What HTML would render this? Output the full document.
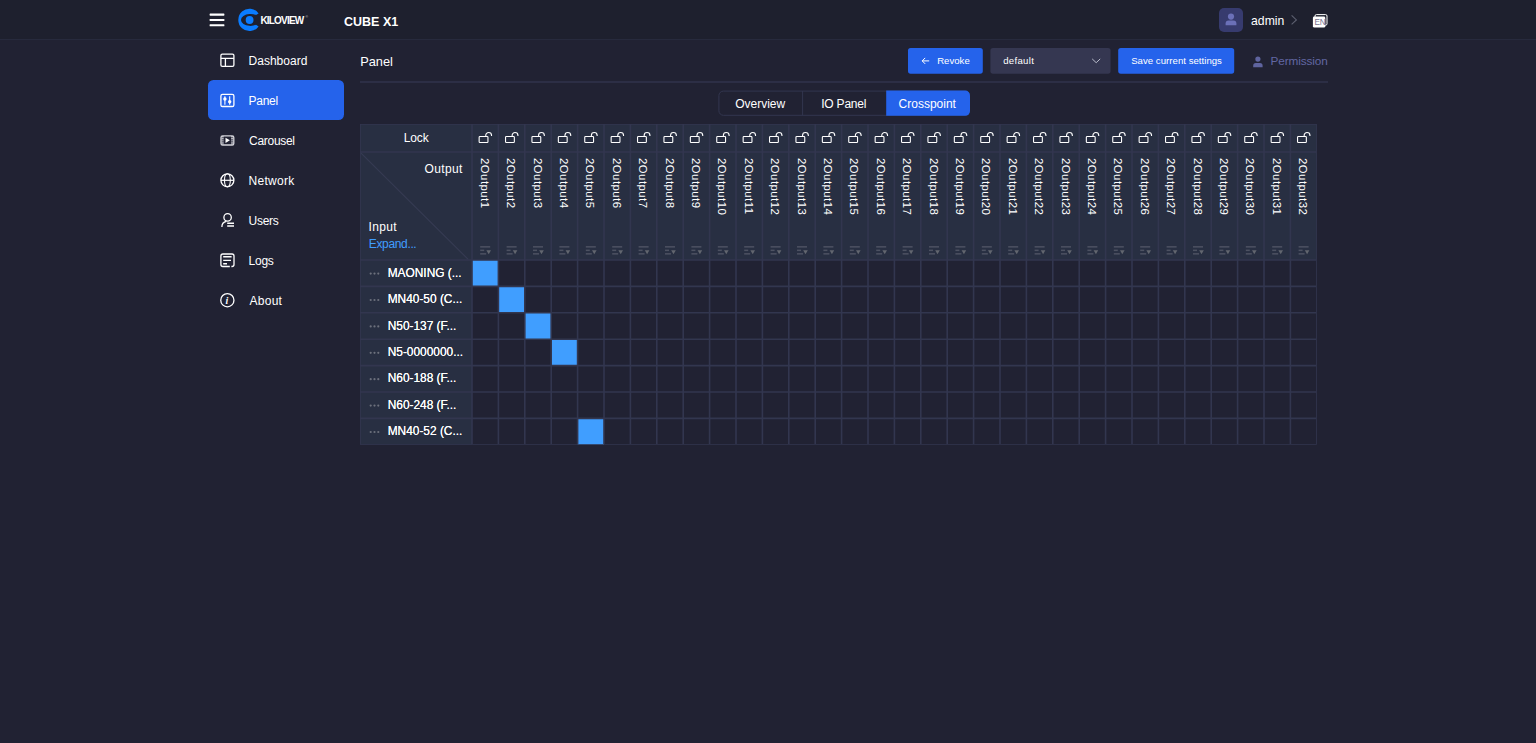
<!DOCTYPE html><html lang="en"><head><meta charset="utf-8"><title>CUBE X1 - Panel</title>
<style>

html,body{margin:0;padding:0;background:#212233;}
body{width:1536px;height:743px;overflow:hidden;background:#212233;font-family:"Liberation Sans", Arial, sans-serif;position:relative;}
.t{position:absolute;white-space:nowrap;}
.abs{position:absolute;}
#top{position:absolute;left:0;top:0;width:1536px;height:39px;background:#1e202e;border-bottom:1px solid #272a3d;}
svg{position:absolute;overflow:visible;}
.vt{position:absolute;writing-mode:vertical-rl;white-space:nowrap;color:#fff;}

</style></head><body>
<div id="top"></div>
<svg style="left:0;top:0" width="340" height="40" viewBox="0 0 340 40">
<rect x="209.6" y="13.6" width="14.8" height="2.1" rx="0.6" fill="#fff"/>
<rect x="209.6" y="18.9" width="14.8" height="2.1" rx="0.6" fill="#fff"/>
<rect x="209.6" y="24.2" width="14.8" height="2.1" rx="0.6" fill="#fff"/>
<path d="M258.6 13.4 A11.2 11.2 0 1 0 258.6 26.4 L256 24.79 A9.5 6.0 0 1 1 256 15.01 Z" fill="#0a7cff"/>
<circle cx="249.6" cy="20" r="3.9" fill="#0a7cff"/>
</svg>
<span class="t " style="left:260.4px;top:15.54px;font-size:10.0px;line-height:10.0px;color:#fff;font-weight:700;letter-spacing:-0.8px;">KILOVIEW</span>
<span class="t " style="left:305.6px;top:16.42px;font-size:3.4px;line-height:3.4px;color:#ccc;font-weight:400;">&reg;</span>
<span class="t " style="left:344.0px;top:15.52px;font-size:12.5px;line-height:12.5px;color:#fff;font-weight:700;">CUBE X1</span>
<div class="abs" style="left:1219px;top:8px;width:24px;height:24px;border-radius:5px;background:#373b6e"></div>
<svg style="left:1219px;top:8px" width="24" height="24" viewBox="0 0 24 24"><circle cx="12" cy="8.6" r="3.1" fill="#6b70b8"/><path d="M6.6 17.2 v-1.6 a3 3 0 0 1 3-3 h4.8 a3 3 0 0 1 3 3 v1.6 z" fill="#6b70b8"/></svg>
<span class="t " style="left:1251.1px;top:15.37px;font-size:12.2px;line-height:12.2px;color:#fff;font-weight:400;">admin</span>
<svg style="left:1288px;top:10px" width="14" height="20" viewBox="0 0 14 20"><path d="M3.6 5.4 L8.4 9.9 L3.6 14.4" fill="none" stroke="#5d6070" stroke-width="1.1"/></svg>
<svg style="left:1310px;top:11.5px" width="20" height="18" viewBox="0 0 20 18"><rect x="5" y="2.6" width="12" height="10.6" rx="1.4" fill="none" stroke="#fff" stroke-width="1"/><rect x="2.9" y="4.6" width="12.4" height="11" rx="1.4" fill="#fff"/></svg>
<span class="t " style="left:1314.4px;top:18.66px;font-size:8.2px;line-height:8.2px;color:#77738f;font-weight:400;letter-spacing:-0.2px;">EN</span>
<div class="abs" style="left:208px;top:80px;width:136px;height:40px;border-radius:5.5px;background:#2563eb"></div>
<span class="t " style="left:248.6px;top:54.54px;font-size:12px;line-height:12px;color:#fff;font-weight:400;letter-spacing:0px;">Dashboard</span>
<span class="t " style="left:248.6px;top:94.54px;font-size:12px;line-height:12px;color:#fff;font-weight:400;letter-spacing:-0.3px;">Panel</span>
<span class="t " style="left:249.1px;top:134.54px;font-size:12px;line-height:12px;color:#fff;font-weight:400;letter-spacing:-0.3px;">Carousel</span>
<span class="t " style="left:248.6px;top:174.54px;font-size:12px;line-height:12px;color:#fff;font-weight:400;letter-spacing:0.27px;">Network</span>
<span class="t " style="left:248.6px;top:214.54px;font-size:12px;line-height:12px;color:#fff;font-weight:400;letter-spacing:-0.3px;">Users</span>
<span class="t " style="left:248.6px;top:254.54px;font-size:12px;line-height:12px;color:#fff;font-weight:400;letter-spacing:-0.25px;">Logs</span>
<span class="t " style="left:249.4px;top:294.54px;font-size:12px;line-height:12px;color:#fff;font-weight:400;letter-spacing:0.3px;">About</span>
<svg style="left:0;top:0" width="345" height="330" viewBox="0 0 345 330" fill="none" stroke="#fff" stroke-width="1.3">
<rect x="220.9" y="54.2" width="13" height="12.2" rx="1.4"/><path d="M220.9 58.3 H233.9 M225.4 58.3 V66.4"/>
<rect x="220.9" y="94.3" width="13" height="12.2" rx="1.6"/><path d="M224.9 96.2 V104.8 M229.7 96.2 V104.8" stroke-width="1.1"/><circle cx="224.9" cy="99" r="1.7" fill="#fff" stroke="none"/><circle cx="229.7" cy="101.7" r="1.7" fill="#fff" stroke="none"/>
<g stroke="#d4d4da"><rect x="221" y="135.8" width="12.8" height="9.2" rx="1.6"/><path d="M222.6 136 V145 M232.2 136 V145" stroke-width="2.2" stroke-dasharray="1.4 0.7" opacity="0.85"/></g><path d="M225.5 137.7 L229.9 140.3 L225.5 142.9 Z" fill="#fff" stroke="none"/>
<circle cx="227.4" cy="180.3" r="6.5"/><ellipse cx="227.4" cy="180.3" rx="2.9" ry="6.5" stroke-width="1.1"/><path d="M220.9 180.3 H233.9" stroke-width="1.2"/>
<circle cx="227.6" cy="217.4" r="3.7"/><path d="M221.9 227 A5.6 5.6 0 0 1 226.4 221.3"/><path d="M227.2 223.2 H234 M227.2 225.9 H234" stroke-width="1.5"/>
<path d="M229.8 266.5 H222.9 A2 2 0 0 1 220.9 264.5 V256 A2 2 0 0 1 222.9 254 H232 A2 2 0 0 1 234 256 V264.5 A2 2 0 0 1 232 266.5 H231.4"/><path d="M223.2 256.8 H231.6 M223.2 260.4 H231 M223.2 263.8 H227" stroke-width="1.4"/>
<circle cx="227.35" cy="300.2" r="6.6"/>
</svg>
<span class="t " style="left:225.5px;top:296.24px;font-size:10px;line-height:10px;color:#fff;font-weight:700;font-family:'Liberation Serif',serif;font-style:italic;">i</span>
<span class="t " style="left:360.2px;top:55.56px;font-size:12.8px;line-height:12.8px;color:#fff;font-weight:400;">Panel</span>
<div class="abs" style="left:360px;top:81px;width:968px;height:2px;background:#2c2e45"></div>
<svg style="left:0;top:0" width="1240" height="80" viewBox="0 0 1240 80"><rect x="908" y="48" width="74.8" height="25.7" rx="2.6" fill="#2563eb"/><rect x="990.4" y="48" width="120.2" height="25.7" rx="2.6" fill="#353751"/><rect x="1118.2" y="48" width="116" height="25.7" rx="2.6" fill="#2563eb"/></svg>
<svg style="left:912.4px;top:47.6px" width="30" height="26" viewBox="0 0 30 26"><path d="M13.2 9.9 L10.2 12.9 L13.2 15.9 M10.2 12.9 H17.2" fill="none" stroke="#fff" stroke-width="1"/></svg>
<span class="t " style="left:937.2px;top:55.77px;font-size:9.6px;line-height:9.6px;color:#fff;font-weight:400;">Revoke</span>
<span class="t " style="left:1003.2px;top:55.77px;font-size:9.6px;line-height:9.6px;color:#fff;font-weight:400;letter-spacing:0.3px;">default</span>
<svg style="left:1088px;top:54px" width="16" height="14" viewBox="0 0 16 14"><path d="M4.2 4.9 L8.2 8.7 L12.2 4.9" fill="none" stroke="#b9bccb" stroke-width="1"/></svg>
<span class="t " style="left:1131.2px;top:55.77px;font-size:9.6px;line-height:9.6px;color:#fff;font-weight:400;letter-spacing:0.03px;">Save current settings</span>
<svg style="left:1250.4px;top:52.6px" width="16" height="18" viewBox="0 0 16 18"><circle cx="7.9" cy="6.1" r="2.6" fill="#5f649f"/><path d="M3.2 14.2 v-1.6 a2.6 2.6 0 0 1 2.6 -2.6 h4.2 a2.6 2.6 0 0 1 2.6 2.6 v1.6 z" fill="#5f649f"/></svg>
<span class="t " style="left:1270.6px;top:55.91px;font-size:11.8px;line-height:11.8px;color:#6267a3;font-weight:400;letter-spacing:-0.13px;">Permission</span>
<svg style="left:0;top:0" width="980" height="120" viewBox="0 0 980 120"><rect x="718.9" y="91.1" width="250.6" height="24.2" rx="4.5" fill="none" stroke="#32364f" stroke-width="1"/><path d="M802.6 91 V115.4" stroke="#32364f" stroke-width="1"/><path d="M886.2 90.6 H965.2 A4.8 4.8 0 0 1 970 95.4 V111 A4.8 4.8 0 0 1 965.2 115.8 H886.2 Z" fill="#2563eb"/></svg>
<span class="t " style="left:735.2px;top:98.24px;font-size:12px;line-height:12px;color:#fff;font-weight:400;">Overview</span>
<span class="t " style="left:821.2px;top:98.24px;font-size:12px;line-height:12px;color:#fff;font-weight:400;letter-spacing:-0.2px;">IO Panel</span>
<span class="t " style="left:898.6px;top:98.24px;font-size:12px;line-height:12px;color:#fff;font-weight:400;">Crosspoint</span>
<svg style="left:0;top:0" width="1536" height="460" viewBox="0 0 1536 460">
<rect x="360.0" y="124.0" width="956.80" height="136.00" fill="#282f42"/>
<rect x="360.0" y="260.0" width="112.00" height="184.80" fill="#282f42"/>
<rect x="472.0" y="260.0" width="844.80" height="184.80" fill="#212233"/>
<rect x="472.00" y="260.00" width="26.4" height="26.4" fill="#409eff"/>
<rect x="498.40" y="286.40" width="26.4" height="26.4" fill="#409eff"/>
<rect x="524.80" y="312.80" width="26.4" height="26.4" fill="#409eff"/>
<rect x="551.20" y="339.20" width="26.4" height="26.4" fill="#409eff"/>
<rect x="577.60" y="418.40" width="26.4" height="26.4" fill="#409eff"/>
<path d="M360.8 152.8 L468.2 259.4" stroke="#363b53" stroke-width="1.1" fill="none"/>
<path d="M360.0 124.0h956.80v0.8h-956.80zM360.0 124.0h0.8v320.80h-0.8zM1316.00 124.0h0.8v320.80h-0.8zM360.0 444.00h956.80v0.8h-956.80zM471.20 124.0h1.6v320.80h-1.6zM497.60 124.0h1.6v320.80h-1.6zM524.00 124.0h1.6v320.80h-1.6zM550.40 124.0h1.6v320.80h-1.6zM576.80 124.0h1.6v320.80h-1.6zM603.20 124.0h1.6v320.80h-1.6zM629.60 124.0h1.6v320.80h-1.6zM656.00 124.0h1.6v320.80h-1.6zM682.40 124.0h1.6v320.80h-1.6zM708.80 124.0h1.6v320.80h-1.6zM735.20 124.0h1.6v320.80h-1.6zM761.60 124.0h1.6v320.80h-1.6zM788.00 124.0h1.6v320.80h-1.6zM814.40 124.0h1.6v320.80h-1.6zM840.80 124.0h1.6v320.80h-1.6zM867.20 124.0h1.6v320.80h-1.6zM893.60 124.0h1.6v320.80h-1.6zM920.00 124.0h1.6v320.80h-1.6zM946.40 124.0h1.6v320.80h-1.6zM972.80 124.0h1.6v320.80h-1.6zM999.20 124.0h1.6v320.80h-1.6zM1025.60 124.0h1.6v320.80h-1.6zM1052.00 124.0h1.6v320.80h-1.6zM1078.40 124.0h1.6v320.80h-1.6zM1104.80 124.0h1.6v320.80h-1.6zM1131.20 124.0h1.6v320.80h-1.6zM1157.60 124.0h1.6v320.80h-1.6zM1184.00 124.0h1.6v320.80h-1.6zM1210.40 124.0h1.6v320.80h-1.6zM1236.80 124.0h1.6v320.80h-1.6zM1263.20 124.0h1.6v320.80h-1.6zM1289.60 124.0h1.6v320.80h-1.6zM360.0 151.20h956.80v1.6h-956.80zM360.0 259.20h956.80v1.6h-956.80zM360.0 285.60h956.80v1.6h-956.80zM360.0 312.00h956.80v1.6h-956.80zM360.0 338.40h956.80v1.6h-956.80zM360.0 364.80h956.80v1.6h-956.80zM360.0 391.20h956.80v1.6h-956.80zM360.0 417.60h956.80v1.6h-956.80z" fill="#32364f" fill-rule="nonzero"/>
<g fill="none" stroke="#fff" stroke-width="1.1"><rect x="479.15" y="136.5" width="8.8" height="6" rx="0.8"/><path d="M485.75 136.2 v-0.8 a2.9 2.9 0 0 1 5.8 0 v0.6"/></g>
<g fill="#4d5262"><rect x="480.20" y="246.1" width="10" height="1.5"/><rect x="480.20" y="249.6" width="4" height="1.5"/><rect x="480.20" y="253.1" width="6" height="1.5"/><path d="M486.40 250.3 h4.6 l-2.3 4 z" fill="#62666f"/></g>
<g fill="none" stroke="#fff" stroke-width="1.1"><rect x="505.55" y="136.5" width="8.8" height="6" rx="0.8"/><path d="M512.15 136.2 v-0.8 a2.9 2.9 0 0 1 5.8 0 v0.6"/></g>
<g fill="#4d5262"><rect x="506.60" y="246.1" width="10" height="1.5"/><rect x="506.60" y="249.6" width="4" height="1.5"/><rect x="506.60" y="253.1" width="6" height="1.5"/><path d="M512.80 250.3 h4.6 l-2.3 4 z" fill="#62666f"/></g>
<g fill="none" stroke="#fff" stroke-width="1.1"><rect x="531.95" y="136.5" width="8.8" height="6" rx="0.8"/><path d="M538.55 136.2 v-0.8 a2.9 2.9 0 0 1 5.8 0 v0.6"/></g>
<g fill="#4d5262"><rect x="533.00" y="246.1" width="10" height="1.5"/><rect x="533.00" y="249.6" width="4" height="1.5"/><rect x="533.00" y="253.1" width="6" height="1.5"/><path d="M539.20 250.3 h4.6 l-2.3 4 z" fill="#62666f"/></g>
<g fill="none" stroke="#fff" stroke-width="1.1"><rect x="558.35" y="136.5" width="8.8" height="6" rx="0.8"/><path d="M564.95 136.2 v-0.8 a2.9 2.9 0 0 1 5.8 0 v0.6"/></g>
<g fill="#4d5262"><rect x="559.40" y="246.1" width="10" height="1.5"/><rect x="559.40" y="249.6" width="4" height="1.5"/><rect x="559.40" y="253.1" width="6" height="1.5"/><path d="M565.60 250.3 h4.6 l-2.3 4 z" fill="#62666f"/></g>
<g fill="none" stroke="#fff" stroke-width="1.1"><rect x="584.75" y="136.5" width="8.8" height="6" rx="0.8"/><path d="M591.35 136.2 v-0.8 a2.9 2.9 0 0 1 5.8 0 v0.6"/></g>
<g fill="#4d5262"><rect x="585.80" y="246.1" width="10" height="1.5"/><rect x="585.80" y="249.6" width="4" height="1.5"/><rect x="585.80" y="253.1" width="6" height="1.5"/><path d="M592.00 250.3 h4.6 l-2.3 4 z" fill="#62666f"/></g>
<g fill="none" stroke="#fff" stroke-width="1.1"><rect x="611.15" y="136.5" width="8.8" height="6" rx="0.8"/><path d="M617.75 136.2 v-0.8 a2.9 2.9 0 0 1 5.8 0 v0.6"/></g>
<g fill="#4d5262"><rect x="612.20" y="246.1" width="10" height="1.5"/><rect x="612.20" y="249.6" width="4" height="1.5"/><rect x="612.20" y="253.1" width="6" height="1.5"/><path d="M618.40 250.3 h4.6 l-2.3 4 z" fill="#62666f"/></g>
<g fill="none" stroke="#fff" stroke-width="1.1"><rect x="637.55" y="136.5" width="8.8" height="6" rx="0.8"/><path d="M644.15 136.2 v-0.8 a2.9 2.9 0 0 1 5.8 0 v0.6"/></g>
<g fill="#4d5262"><rect x="638.60" y="246.1" width="10" height="1.5"/><rect x="638.60" y="249.6" width="4" height="1.5"/><rect x="638.60" y="253.1" width="6" height="1.5"/><path d="M644.80 250.3 h4.6 l-2.3 4 z" fill="#62666f"/></g>
<g fill="none" stroke="#fff" stroke-width="1.1"><rect x="663.95" y="136.5" width="8.8" height="6" rx="0.8"/><path d="M670.55 136.2 v-0.8 a2.9 2.9 0 0 1 5.8 0 v0.6"/></g>
<g fill="#4d5262"><rect x="665.00" y="246.1" width="10" height="1.5"/><rect x="665.00" y="249.6" width="4" height="1.5"/><rect x="665.00" y="253.1" width="6" height="1.5"/><path d="M671.20 250.3 h4.6 l-2.3 4 z" fill="#62666f"/></g>
<g fill="none" stroke="#fff" stroke-width="1.1"><rect x="690.35" y="136.5" width="8.8" height="6" rx="0.8"/><path d="M696.95 136.2 v-0.8 a2.9 2.9 0 0 1 5.8 0 v0.6"/></g>
<g fill="#4d5262"><rect x="691.40" y="246.1" width="10" height="1.5"/><rect x="691.40" y="249.6" width="4" height="1.5"/><rect x="691.40" y="253.1" width="6" height="1.5"/><path d="M697.60 250.3 h4.6 l-2.3 4 z" fill="#62666f"/></g>
<g fill="none" stroke="#fff" stroke-width="1.1"><rect x="716.75" y="136.5" width="8.8" height="6" rx="0.8"/><path d="M723.35 136.2 v-0.8 a2.9 2.9 0 0 1 5.8 0 v0.6"/></g>
<g fill="#4d5262"><rect x="717.80" y="246.1" width="10" height="1.5"/><rect x="717.80" y="249.6" width="4" height="1.5"/><rect x="717.80" y="253.1" width="6" height="1.5"/><path d="M724.00 250.3 h4.6 l-2.3 4 z" fill="#62666f"/></g>
<g fill="none" stroke="#fff" stroke-width="1.1"><rect x="743.15" y="136.5" width="8.8" height="6" rx="0.8"/><path d="M749.75 136.2 v-0.8 a2.9 2.9 0 0 1 5.8 0 v0.6"/></g>
<g fill="#4d5262"><rect x="744.20" y="246.1" width="10" height="1.5"/><rect x="744.20" y="249.6" width="4" height="1.5"/><rect x="744.20" y="253.1" width="6" height="1.5"/><path d="M750.40 250.3 h4.6 l-2.3 4 z" fill="#62666f"/></g>
<g fill="none" stroke="#fff" stroke-width="1.1"><rect x="769.55" y="136.5" width="8.8" height="6" rx="0.8"/><path d="M776.15 136.2 v-0.8 a2.9 2.9 0 0 1 5.8 0 v0.6"/></g>
<g fill="#4d5262"><rect x="770.60" y="246.1" width="10" height="1.5"/><rect x="770.60" y="249.6" width="4" height="1.5"/><rect x="770.60" y="253.1" width="6" height="1.5"/><path d="M776.80 250.3 h4.6 l-2.3 4 z" fill="#62666f"/></g>
<g fill="none" stroke="#fff" stroke-width="1.1"><rect x="795.95" y="136.5" width="8.8" height="6" rx="0.8"/><path d="M802.55 136.2 v-0.8 a2.9 2.9 0 0 1 5.8 0 v0.6"/></g>
<g fill="#4d5262"><rect x="797.00" y="246.1" width="10" height="1.5"/><rect x="797.00" y="249.6" width="4" height="1.5"/><rect x="797.00" y="253.1" width="6" height="1.5"/><path d="M803.20 250.3 h4.6 l-2.3 4 z" fill="#62666f"/></g>
<g fill="none" stroke="#fff" stroke-width="1.1"><rect x="822.35" y="136.5" width="8.8" height="6" rx="0.8"/><path d="M828.95 136.2 v-0.8 a2.9 2.9 0 0 1 5.8 0 v0.6"/></g>
<g fill="#4d5262"><rect x="823.40" y="246.1" width="10" height="1.5"/><rect x="823.40" y="249.6" width="4" height="1.5"/><rect x="823.40" y="253.1" width="6" height="1.5"/><path d="M829.60 250.3 h4.6 l-2.3 4 z" fill="#62666f"/></g>
<g fill="none" stroke="#fff" stroke-width="1.1"><rect x="848.75" y="136.5" width="8.8" height="6" rx="0.8"/><path d="M855.35 136.2 v-0.8 a2.9 2.9 0 0 1 5.8 0 v0.6"/></g>
<g fill="#4d5262"><rect x="849.80" y="246.1" width="10" height="1.5"/><rect x="849.80" y="249.6" width="4" height="1.5"/><rect x="849.80" y="253.1" width="6" height="1.5"/><path d="M856.00 250.3 h4.6 l-2.3 4 z" fill="#62666f"/></g>
<g fill="none" stroke="#fff" stroke-width="1.1"><rect x="875.15" y="136.5" width="8.8" height="6" rx="0.8"/><path d="M881.75 136.2 v-0.8 a2.9 2.9 0 0 1 5.8 0 v0.6"/></g>
<g fill="#4d5262"><rect x="876.20" y="246.1" width="10" height="1.5"/><rect x="876.20" y="249.6" width="4" height="1.5"/><rect x="876.20" y="253.1" width="6" height="1.5"/><path d="M882.40 250.3 h4.6 l-2.3 4 z" fill="#62666f"/></g>
<g fill="none" stroke="#fff" stroke-width="1.1"><rect x="901.55" y="136.5" width="8.8" height="6" rx="0.8"/><path d="M908.15 136.2 v-0.8 a2.9 2.9 0 0 1 5.8 0 v0.6"/></g>
<g fill="#4d5262"><rect x="902.60" y="246.1" width="10" height="1.5"/><rect x="902.60" y="249.6" width="4" height="1.5"/><rect x="902.60" y="253.1" width="6" height="1.5"/><path d="M908.80 250.3 h4.6 l-2.3 4 z" fill="#62666f"/></g>
<g fill="none" stroke="#fff" stroke-width="1.1"><rect x="927.95" y="136.5" width="8.8" height="6" rx="0.8"/><path d="M934.55 136.2 v-0.8 a2.9 2.9 0 0 1 5.8 0 v0.6"/></g>
<g fill="#4d5262"><rect x="929.00" y="246.1" width="10" height="1.5"/><rect x="929.00" y="249.6" width="4" height="1.5"/><rect x="929.00" y="253.1" width="6" height="1.5"/><path d="M935.20 250.3 h4.6 l-2.3 4 z" fill="#62666f"/></g>
<g fill="none" stroke="#fff" stroke-width="1.1"><rect x="954.35" y="136.5" width="8.8" height="6" rx="0.8"/><path d="M960.95 136.2 v-0.8 a2.9 2.9 0 0 1 5.8 0 v0.6"/></g>
<g fill="#4d5262"><rect x="955.40" y="246.1" width="10" height="1.5"/><rect x="955.40" y="249.6" width="4" height="1.5"/><rect x="955.40" y="253.1" width="6" height="1.5"/><path d="M961.60 250.3 h4.6 l-2.3 4 z" fill="#62666f"/></g>
<g fill="none" stroke="#fff" stroke-width="1.1"><rect x="980.75" y="136.5" width="8.8" height="6" rx="0.8"/><path d="M987.35 136.2 v-0.8 a2.9 2.9 0 0 1 5.8 0 v0.6"/></g>
<g fill="#4d5262"><rect x="981.80" y="246.1" width="10" height="1.5"/><rect x="981.80" y="249.6" width="4" height="1.5"/><rect x="981.80" y="253.1" width="6" height="1.5"/><path d="M988.00 250.3 h4.6 l-2.3 4 z" fill="#62666f"/></g>
<g fill="none" stroke="#fff" stroke-width="1.1"><rect x="1007.15" y="136.5" width="8.8" height="6" rx="0.8"/><path d="M1013.75 136.2 v-0.8 a2.9 2.9 0 0 1 5.8 0 v0.6"/></g>
<g fill="#4d5262"><rect x="1008.20" y="246.1" width="10" height="1.5"/><rect x="1008.20" y="249.6" width="4" height="1.5"/><rect x="1008.20" y="253.1" width="6" height="1.5"/><path d="M1014.40 250.3 h4.6 l-2.3 4 z" fill="#62666f"/></g>
<g fill="none" stroke="#fff" stroke-width="1.1"><rect x="1033.55" y="136.5" width="8.8" height="6" rx="0.8"/><path d="M1040.15 136.2 v-0.8 a2.9 2.9 0 0 1 5.8 0 v0.6"/></g>
<g fill="#4d5262"><rect x="1034.60" y="246.1" width="10" height="1.5"/><rect x="1034.60" y="249.6" width="4" height="1.5"/><rect x="1034.60" y="253.1" width="6" height="1.5"/><path d="M1040.80 250.3 h4.6 l-2.3 4 z" fill="#62666f"/></g>
<g fill="none" stroke="#fff" stroke-width="1.1"><rect x="1059.95" y="136.5" width="8.8" height="6" rx="0.8"/><path d="M1066.55 136.2 v-0.8 a2.9 2.9 0 0 1 5.8 0 v0.6"/></g>
<g fill="#4d5262"><rect x="1061.00" y="246.1" width="10" height="1.5"/><rect x="1061.00" y="249.6" width="4" height="1.5"/><rect x="1061.00" y="253.1" width="6" height="1.5"/><path d="M1067.20 250.3 h4.6 l-2.3 4 z" fill="#62666f"/></g>
<g fill="none" stroke="#fff" stroke-width="1.1"><rect x="1086.35" y="136.5" width="8.8" height="6" rx="0.8"/><path d="M1092.95 136.2 v-0.8 a2.9 2.9 0 0 1 5.8 0 v0.6"/></g>
<g fill="#4d5262"><rect x="1087.40" y="246.1" width="10" height="1.5"/><rect x="1087.40" y="249.6" width="4" height="1.5"/><rect x="1087.40" y="253.1" width="6" height="1.5"/><path d="M1093.60 250.3 h4.6 l-2.3 4 z" fill="#62666f"/></g>
<g fill="none" stroke="#fff" stroke-width="1.1"><rect x="1112.75" y="136.5" width="8.8" height="6" rx="0.8"/><path d="M1119.35 136.2 v-0.8 a2.9 2.9 0 0 1 5.8 0 v0.6"/></g>
<g fill="#4d5262"><rect x="1113.80" y="246.1" width="10" height="1.5"/><rect x="1113.80" y="249.6" width="4" height="1.5"/><rect x="1113.80" y="253.1" width="6" height="1.5"/><path d="M1120.00 250.3 h4.6 l-2.3 4 z" fill="#62666f"/></g>
<g fill="none" stroke="#fff" stroke-width="1.1"><rect x="1139.15" y="136.5" width="8.8" height="6" rx="0.8"/><path d="M1145.75 136.2 v-0.8 a2.9 2.9 0 0 1 5.8 0 v0.6"/></g>
<g fill="#4d5262"><rect x="1140.20" y="246.1" width="10" height="1.5"/><rect x="1140.20" y="249.6" width="4" height="1.5"/><rect x="1140.20" y="253.1" width="6" height="1.5"/><path d="M1146.40 250.3 h4.6 l-2.3 4 z" fill="#62666f"/></g>
<g fill="none" stroke="#fff" stroke-width="1.1"><rect x="1165.55" y="136.5" width="8.8" height="6" rx="0.8"/><path d="M1172.15 136.2 v-0.8 a2.9 2.9 0 0 1 5.8 0 v0.6"/></g>
<g fill="#4d5262"><rect x="1166.60" y="246.1" width="10" height="1.5"/><rect x="1166.60" y="249.6" width="4" height="1.5"/><rect x="1166.60" y="253.1" width="6" height="1.5"/><path d="M1172.80 250.3 h4.6 l-2.3 4 z" fill="#62666f"/></g>
<g fill="none" stroke="#fff" stroke-width="1.1"><rect x="1191.95" y="136.5" width="8.8" height="6" rx="0.8"/><path d="M1198.55 136.2 v-0.8 a2.9 2.9 0 0 1 5.8 0 v0.6"/></g>
<g fill="#4d5262"><rect x="1193.00" y="246.1" width="10" height="1.5"/><rect x="1193.00" y="249.6" width="4" height="1.5"/><rect x="1193.00" y="253.1" width="6" height="1.5"/><path d="M1199.20 250.3 h4.6 l-2.3 4 z" fill="#62666f"/></g>
<g fill="none" stroke="#fff" stroke-width="1.1"><rect x="1218.35" y="136.5" width="8.8" height="6" rx="0.8"/><path d="M1224.95 136.2 v-0.8 a2.9 2.9 0 0 1 5.8 0 v0.6"/></g>
<g fill="#4d5262"><rect x="1219.40" y="246.1" width="10" height="1.5"/><rect x="1219.40" y="249.6" width="4" height="1.5"/><rect x="1219.40" y="253.1" width="6" height="1.5"/><path d="M1225.60 250.3 h4.6 l-2.3 4 z" fill="#62666f"/></g>
<g fill="none" stroke="#fff" stroke-width="1.1"><rect x="1244.75" y="136.5" width="8.8" height="6" rx="0.8"/><path d="M1251.35 136.2 v-0.8 a2.9 2.9 0 0 1 5.8 0 v0.6"/></g>
<g fill="#4d5262"><rect x="1245.80" y="246.1" width="10" height="1.5"/><rect x="1245.80" y="249.6" width="4" height="1.5"/><rect x="1245.80" y="253.1" width="6" height="1.5"/><path d="M1252.00 250.3 h4.6 l-2.3 4 z" fill="#62666f"/></g>
<g fill="none" stroke="#fff" stroke-width="1.1"><rect x="1271.15" y="136.5" width="8.8" height="6" rx="0.8"/><path d="M1277.75 136.2 v-0.8 a2.9 2.9 0 0 1 5.8 0 v0.6"/></g>
<g fill="#4d5262"><rect x="1272.20" y="246.1" width="10" height="1.5"/><rect x="1272.20" y="249.6" width="4" height="1.5"/><rect x="1272.20" y="253.1" width="6" height="1.5"/><path d="M1278.40 250.3 h4.6 l-2.3 4 z" fill="#62666f"/></g>
<g fill="none" stroke="#fff" stroke-width="1.1"><rect x="1297.55" y="136.5" width="8.8" height="6" rx="0.8"/><path d="M1304.15 136.2 v-0.8 a2.9 2.9 0 0 1 5.8 0 v0.6"/></g>
<g fill="#4d5262"><rect x="1298.60" y="246.1" width="10" height="1.5"/><rect x="1298.60" y="249.6" width="4" height="1.5"/><rect x="1298.60" y="253.1" width="6" height="1.5"/><path d="M1304.80 250.3 h4.6 l-2.3 4 z" fill="#62666f"/></g>
<g fill="#6c707c"><circle cx="370.7" cy="273.60" r="1.1"/><circle cx="374.5" cy="273.60" r="1.1"/><circle cx="378.3" cy="273.60" r="1.1"/></g>
<g fill="#6c707c"><circle cx="370.7" cy="300.00" r="1.1"/><circle cx="374.5" cy="300.00" r="1.1"/><circle cx="378.3" cy="300.00" r="1.1"/></g>
<g fill="#6c707c"><circle cx="370.7" cy="326.40" r="1.1"/><circle cx="374.5" cy="326.40" r="1.1"/><circle cx="378.3" cy="326.40" r="1.1"/></g>
<g fill="#6c707c"><circle cx="370.7" cy="352.80" r="1.1"/><circle cx="374.5" cy="352.80" r="1.1"/><circle cx="378.3" cy="352.80" r="1.1"/></g>
<g fill="#6c707c"><circle cx="370.7" cy="379.20" r="1.1"/><circle cx="374.5" cy="379.20" r="1.1"/><circle cx="378.3" cy="379.20" r="1.1"/></g>
<g fill="#6c707c"><circle cx="370.7" cy="405.60" r="1.1"/><circle cx="374.5" cy="405.60" r="1.1"/><circle cx="378.3" cy="405.60" r="1.1"/></g>
<g fill="#6c707c"><circle cx="370.7" cy="432.00" r="1.1"/><circle cx="374.5" cy="432.00" r="1.1"/><circle cx="378.3" cy="432.00" r="1.1"/></g>
</svg>
<span class="t " style="left:403.8px;top:132.44px;font-size:12px;line-height:12px;color:#fff;font-weight:400;letter-spacing:-0.15px;">Lock</span>
<span class="t " style="left:424.6px;top:163.04px;font-size:12px;line-height:12px;color:#fff;font-weight:400;letter-spacing:0.35px;">Output</span>
<span class="t " style="left:368.6px;top:221.24px;font-size:12px;line-height:12px;color:#fff;font-weight:400;letter-spacing:0.3px;">Input</span>
<span class="t " style="left:368.8px;top:237.64px;font-size:12px;line-height:12px;color:#409eff;font-weight:400;letter-spacing:-0.35px;">Expand...</span>
<span class="vt" style="left:477.70px;top:157.7px;font-size:11.4px;line-height:14px;width:14px;letter-spacing:0.46px;">2Output1</span>
<span class="vt" style="left:504.10px;top:157.7px;font-size:11.4px;line-height:14px;width:14px;letter-spacing:0.46px;">2Output2</span>
<span class="vt" style="left:530.50px;top:157.7px;font-size:11.4px;line-height:14px;width:14px;letter-spacing:0.46px;">2Output3</span>
<span class="vt" style="left:556.90px;top:157.7px;font-size:11.4px;line-height:14px;width:14px;letter-spacing:0.46px;">2Output4</span>
<span class="vt" style="left:583.30px;top:157.7px;font-size:11.4px;line-height:14px;width:14px;letter-spacing:0.46px;">2Output5</span>
<span class="vt" style="left:609.70px;top:157.7px;font-size:11.4px;line-height:14px;width:14px;letter-spacing:0.46px;">2Output6</span>
<span class="vt" style="left:636.10px;top:157.7px;font-size:11.4px;line-height:14px;width:14px;letter-spacing:0.46px;">2Output7</span>
<span class="vt" style="left:662.50px;top:157.7px;font-size:11.4px;line-height:14px;width:14px;letter-spacing:0.46px;">2Output8</span>
<span class="vt" style="left:688.90px;top:157.7px;font-size:11.4px;line-height:14px;width:14px;letter-spacing:0.46px;">2Output9</span>
<span class="vt" style="left:715.30px;top:157.7px;font-size:11.4px;line-height:14px;width:14px;letter-spacing:0.46px;">2Output10</span>
<span class="vt" style="left:741.70px;top:157.7px;font-size:11.4px;line-height:14px;width:14px;letter-spacing:0.46px;">2Output11</span>
<span class="vt" style="left:768.10px;top:157.7px;font-size:11.4px;line-height:14px;width:14px;letter-spacing:0.46px;">2Output12</span>
<span class="vt" style="left:794.50px;top:157.7px;font-size:11.4px;line-height:14px;width:14px;letter-spacing:0.46px;">2Output13</span>
<span class="vt" style="left:820.90px;top:157.7px;font-size:11.4px;line-height:14px;width:14px;letter-spacing:0.46px;">2Output14</span>
<span class="vt" style="left:847.30px;top:157.7px;font-size:11.4px;line-height:14px;width:14px;letter-spacing:0.46px;">2Output15</span>
<span class="vt" style="left:873.70px;top:157.7px;font-size:11.4px;line-height:14px;width:14px;letter-spacing:0.46px;">2Output16</span>
<span class="vt" style="left:900.10px;top:157.7px;font-size:11.4px;line-height:14px;width:14px;letter-spacing:0.46px;">2Output17</span>
<span class="vt" style="left:926.50px;top:157.7px;font-size:11.4px;line-height:14px;width:14px;letter-spacing:0.46px;">2Output18</span>
<span class="vt" style="left:952.90px;top:157.7px;font-size:11.4px;line-height:14px;width:14px;letter-spacing:0.46px;">2Output19</span>
<span class="vt" style="left:979.30px;top:157.7px;font-size:11.4px;line-height:14px;width:14px;letter-spacing:0.46px;">2Output20</span>
<span class="vt" style="left:1005.70px;top:157.7px;font-size:11.4px;line-height:14px;width:14px;letter-spacing:0.46px;">2Output21</span>
<span class="vt" style="left:1032.10px;top:157.7px;font-size:11.4px;line-height:14px;width:14px;letter-spacing:0.46px;">2Output22</span>
<span class="vt" style="left:1058.50px;top:157.7px;font-size:11.4px;line-height:14px;width:14px;letter-spacing:0.46px;">2Output23</span>
<span class="vt" style="left:1084.90px;top:157.7px;font-size:11.4px;line-height:14px;width:14px;letter-spacing:0.46px;">2Output24</span>
<span class="vt" style="left:1111.30px;top:157.7px;font-size:11.4px;line-height:14px;width:14px;letter-spacing:0.46px;">2Output25</span>
<span class="vt" style="left:1137.70px;top:157.7px;font-size:11.4px;line-height:14px;width:14px;letter-spacing:0.46px;">2Output26</span>
<span class="vt" style="left:1164.10px;top:157.7px;font-size:11.4px;line-height:14px;width:14px;letter-spacing:0.46px;">2Output27</span>
<span class="vt" style="left:1190.50px;top:157.7px;font-size:11.4px;line-height:14px;width:14px;letter-spacing:0.46px;">2Output28</span>
<span class="vt" style="left:1216.90px;top:157.7px;font-size:11.4px;line-height:14px;width:14px;letter-spacing:0.46px;">2Output29</span>
<span class="vt" style="left:1243.30px;top:157.7px;font-size:11.4px;line-height:14px;width:14px;letter-spacing:0.46px;">2Output30</span>
<span class="vt" style="left:1269.70px;top:157.7px;font-size:11.4px;line-height:14px;width:14px;letter-spacing:0.46px;">2Output31</span>
<span class="vt" style="left:1296.10px;top:157.7px;font-size:11.4px;line-height:14px;width:14px;letter-spacing:0.46px;">2Output32</span>
<span class="t " style="left:387.7px;top:267.73px;font-size:11.9px;line-height:11.9px;color:#fff;font-weight:400;text-shadow:0 0 0.1px #fff;">MAONING (...</span>
<span class="t " style="left:387.7px;top:294.13px;font-size:11.9px;line-height:11.9px;color:#fff;font-weight:400;text-shadow:0 0 0.1px #fff;">MN40-50 (C...</span>
<span class="t " style="left:387.7px;top:320.53px;font-size:11.9px;line-height:11.9px;color:#fff;font-weight:400;text-shadow:0 0 0.1px #fff;">N50-137 (F...</span>
<span class="t " style="left:387.7px;top:346.93px;font-size:11.9px;line-height:11.9px;color:#fff;font-weight:400;text-shadow:0 0 0.1px #fff;">N5-0000000...</span>
<span class="t " style="left:387.7px;top:373.33px;font-size:11.9px;line-height:11.9px;color:#fff;font-weight:400;text-shadow:0 0 0.1px #fff;">N60-188 (F...</span>
<span class="t " style="left:387.7px;top:399.73px;font-size:11.9px;line-height:11.9px;color:#fff;font-weight:400;text-shadow:0 0 0.1px #fff;">N60-248 (F...</span>
<span class="t " style="left:387.7px;top:426.13px;font-size:11.9px;line-height:11.9px;color:#fff;font-weight:400;text-shadow:0 0 0.1px #fff;">MN40-52 (C...</span>
</body></html>
